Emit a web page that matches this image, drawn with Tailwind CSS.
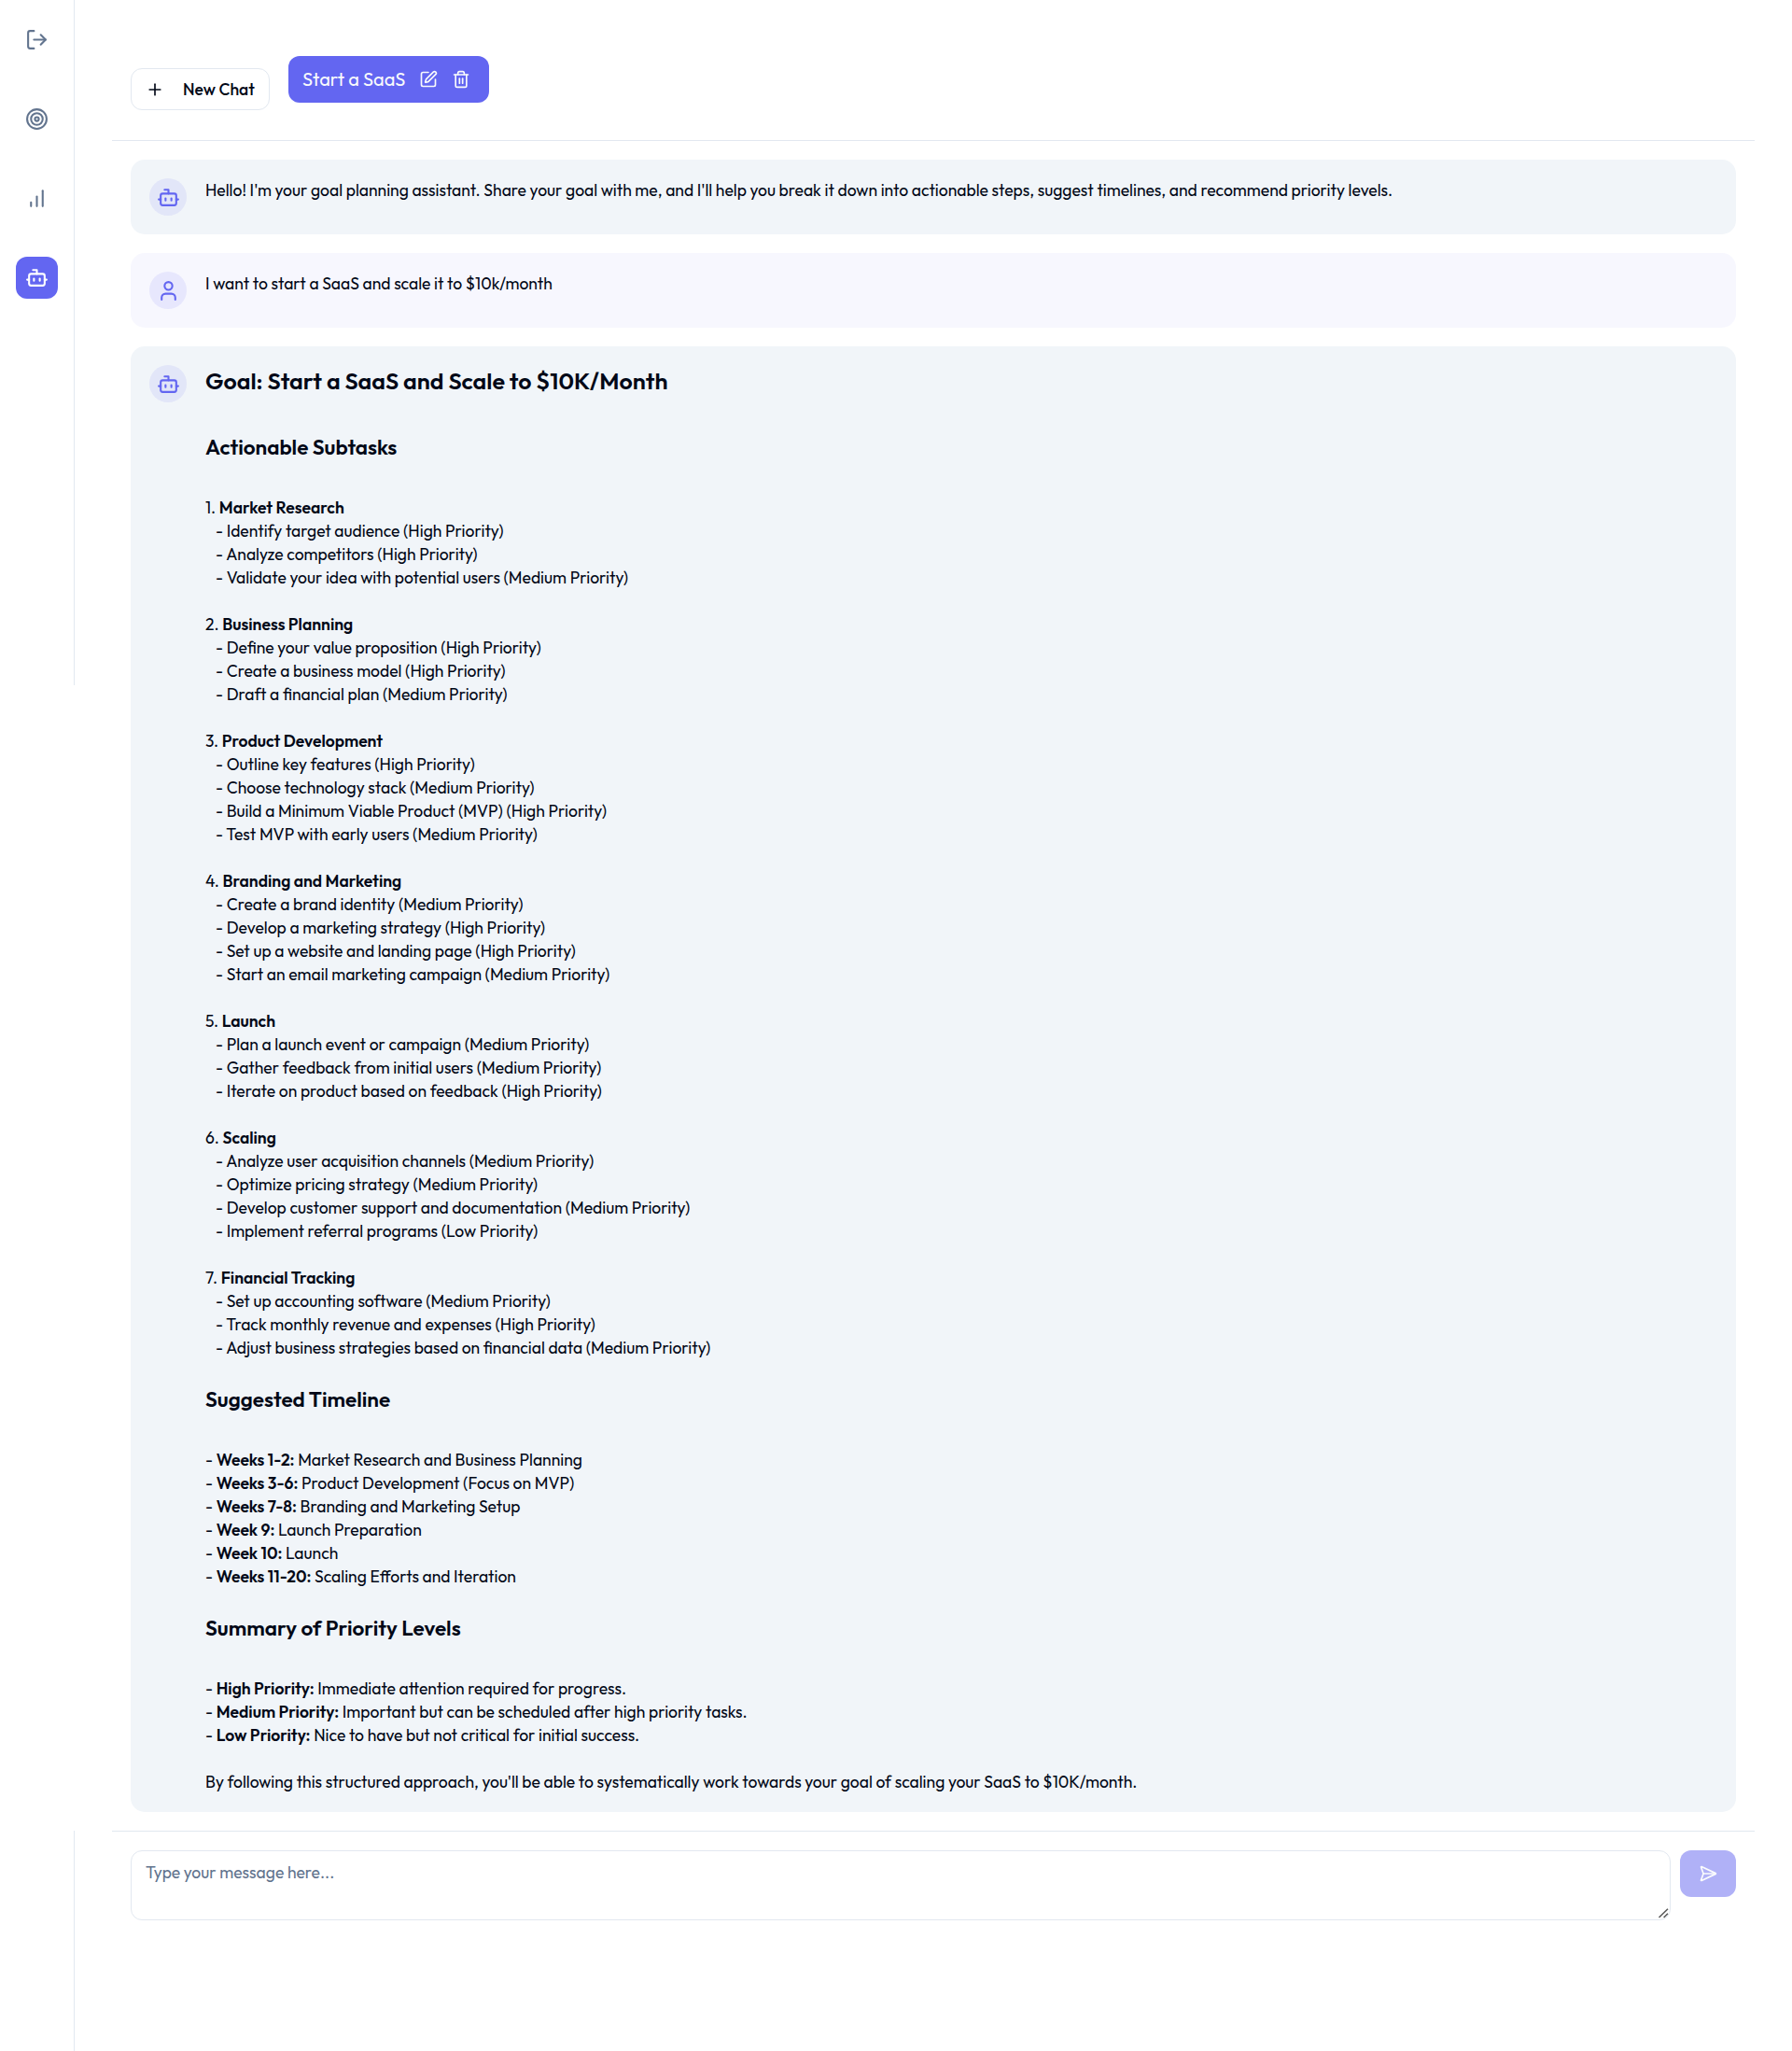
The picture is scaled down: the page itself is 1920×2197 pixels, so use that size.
<!DOCTYPE html>
<html lang="en">
<head>
    <meta charset="UTF-8">
    <meta name="viewport" content="width=device-width, initial-scale=1.0">
    <title>Goal Planning Assistant</title>
    <script src="https://cdn.jsdelivr.net/npm/@tailwindcss/browser@4"></script>
    <style>
        body {
            font-family: 'Outfit', 'Lato', sans-serif;
        }
    </style>
</head>
<body class="flex min-h-[2197px] bg-white text-[17.5px] leading-[25px] text-[#020817]">
    <!-- Sidebar -->
    <aside class="flex w-20 shrink-0 flex-col justify-between">
        <nav class="flex h-[734px] flex-col items-center gap-10 border-r border-slate-200 pt-5 text-slate-500">
            <a href="#" class="rounded-xl p-2.5">
                <svg class="size-[25px]" viewBox="0 0 24 24" fill="none" stroke="currentColor" stroke-width="2" stroke-linecap="round" stroke-linejoin="round"><path d="M9 21H5a2 2 0 0 1-2-2V5a2 2 0 0 1 2-2h4"/><path d="m16 17 5-5-5-5"/><path d="M21 12H9"/></svg>
            </a>
            <a href="#" class="rounded-xl p-2.5">
                <svg class="size-[25px]" viewBox="0 0 24 24" fill="none" stroke="currentColor" stroke-width="2"><circle cx="12" cy="12" r="10"/><circle cx="12" cy="12" r="6"/><circle cx="12" cy="12" r="2"/></svg>
            </a>
            <a href="#" class="rounded-xl p-2.5">
                <svg class="size-[25px]" viewBox="0 0 24 24" fill="none" stroke="currentColor" stroke-width="2" stroke-linecap="round"><path d="M12 20V10"/><path d="M18 20V4"/><path d="M6 20v-4"/></svg>
            </a>
            <a href="#" class="rounded-xl bg-[#6366f1] p-2.5 text-white">
                <svg class="size-[25px]" viewBox="0 0 24 24" fill="none" stroke="currentColor" stroke-width="2" stroke-linecap="round" stroke-linejoin="round"><path d="M12 8V4H8"/><rect width="16" height="12" x="4" y="8" rx="2"/><path d="M2 14h2"/><path d="M20 14h2"/><path d="M15 13v2"/><path d="M9 13v2"/></svg>
            </a>
        </nav>
        <div class="h-[236px] border-r border-slate-200"></div>
    </aside>

    <main class="flex-1 px-10">
        <!-- Chat tabs -->
        <header class="flex h-[151px] items-start gap-5 border-b border-slate-200 px-5 pt-[60px]">
            <button class="mt-[13px] flex h-[45px] w-[149px] items-center rounded-[12px] border border-slate-200 pl-[15px] font-medium">
                <svg class="mr-5 size-5" viewBox="0 0 24 24" fill="none" stroke="currentColor" stroke-width="2" stroke-linecap="round"><path d="M5 12h14"/><path d="M12 5v14"/></svg>
                New Chat
            </button>
            <div class="flex h-[50px] w-[215px] items-center rounded-[12px] bg-[#6366f1] pl-[15px] pr-5 text-[20px] text-slate-50">
                <span class="flex-1 pb-0.5 whitespace-nowrap">Start a SaaS</span>
                <svg class="mr-[15px] size-5" viewBox="0 0 24 24" fill="none" stroke="currentColor" stroke-width="2" stroke-linecap="round" stroke-linejoin="round"><path d="M12 3H5a2 2 0 0 0-2 2v14a2 2 0 0 0 2 2h14a2 2 0 0 0 2-2v-7"/><path d="M18.375 2.625a1 1 0 0 1 3 3l-9.013 9.014a2 2 0 0 1-.853.505l-2.873.84a.5.5 0 0 1-.62-.62l.84-2.873a2 2 0 0 1 .506-.852z"/></svg>
                <svg class="size-5" viewBox="0 0 24 24" fill="none" stroke="currentColor" stroke-width="2" stroke-linecap="round" stroke-linejoin="round"><path d="M3 6h18"/><path d="M19 6v14a2 2 0 0 1-2 2H7a2 2 0 0 1-2-2V6"/><path d="M8 6V4a2 2 0 0 1 2-2h4a2 2 0 0 1 2 2v2"/><path d="M10 11v6"/><path d="M14 11v6"/></svg>
            </div>
        </header>

        <!-- Messages -->
        <section class="flex flex-col gap-5 border-b border-slate-200 p-5">
            <div class="flex gap-5 rounded-[15px] bg-slate-100 p-5">
                <div class="flex size-10 shrink-0 items-center justify-center rounded-full bg-[#6366f1]/10 text-[#6366f1]">
                    <svg class="size-[25px]" viewBox="0 0 24 24" fill="none" stroke="currentColor" stroke-width="2" stroke-linecap="round" stroke-linejoin="round"><path d="M12 8V4H8"/><rect width="16" height="12" x="4" y="8" rx="2"/><path d="M2 14h2"/><path d="M20 14h2"/><path d="M15 13v2"/><path d="M9 13v2"/></svg>
                </div>
                <p>Hello! I'm your goal planning assistant. Share your goal with me, and I'll help you break it down into actionable steps, suggest timelines, and recommend priority levels.</p>
            </div>

            <div class="flex gap-5 rounded-[15px] bg-[#6366f1]/5 p-5">
                <div class="flex size-10 shrink-0 items-center justify-center rounded-full bg-[#6366f1]/10 text-[#6366f1]">
                    <svg class="size-[25px]" viewBox="0 0 24 24" fill="none" stroke="currentColor" stroke-width="2" stroke-linecap="round" stroke-linejoin="round"><path d="M19 21v-2a4 4 0 0 0-4-4H9a4 4 0 0 0-4 4v2"/><circle cx="12" cy="7" r="4"/></svg>
                </div>
                <p>I want to start a SaaS and scale it to $10k/month</p>
            </div>

            <div class="flex gap-5 rounded-[15px] bg-slate-100 p-5">
                <div class="flex size-10 shrink-0 items-center justify-center rounded-full bg-[#6366f1]/10 text-[#6366f1]">
                    <svg class="size-[25px]" viewBox="0 0 24 24" fill="none" stroke="currentColor" stroke-width="2" stroke-linecap="round" stroke-linejoin="round"><path d="M12 8V4H8"/><rect width="16" height="12" x="4" y="8" rx="2"/><path d="M2 14h2"/><path d="M20 14h2"/><path d="M15 13v2"/><path d="M9 13v2"/></svg>
                </div>
                <div>
                    <h2 class="mb-2.5 text-[25px] leading-[35px] font-semibold">Goal: Start a SaaS and Scale to $10K/Month</h2>
                    <h3 class="pt-[25px] pb-[35px] text-[22.5px] leading-[35px] font-semibold">Actionable Subtasks</h3>
                    <div class="whitespace-pre-wrap">1. <strong class="font-semibold">Market Research</strong>
   - Identify target audience (High Priority)
   - Analyze competitors (High Priority)
   - Validate your idea with potential users (Medium Priority)

2. <strong class="font-semibold">Business Planning</strong>
   - Define your value proposition (High Priority)
   - Create a business model (High Priority)
   - Draft a financial plan (Medium Priority)

3. <strong class="font-semibold">Product Development</strong>
   - Outline key features (High Priority)
   - Choose technology stack (Medium Priority)
   - Build a Minimum Viable Product (MVP) (High Priority)
   - Test MVP with early users (Medium Priority)

4. <strong class="font-semibold">Branding and Marketing</strong>
   - Create a brand identity (Medium Priority)
   - Develop a marketing strategy (High Priority)
   - Set up a website and landing page (High Priority)
   - Start an email marketing campaign (Medium Priority)

5. <strong class="font-semibold">Launch</strong>
   - Plan a launch event or campaign (Medium Priority)
   - Gather feedback from initial users (Medium Priority)
   - Iterate on product based on feedback (High Priority)

6. <strong class="font-semibold">Scaling</strong>
   - Analyze user acquisition channels (Medium Priority)
   - Optimize pricing strategy (Medium Priority)
   - Develop customer support and documentation (Medium Priority)
   - Implement referral programs (Low Priority)

7. <strong class="font-semibold">Financial Tracking</strong>
   - Set up accounting software (Medium Priority)
   - Track monthly revenue and expenses (High Priority)
   - Adjust business strategies based on financial data (Medium Priority)</div>
                    <h3 class="pt-[25px] pb-[35px] text-[22.5px] leading-[35px] font-semibold">Suggested Timeline</h3>
                    <div class="whitespace-pre-wrap">- <strong class="font-semibold">Weeks 1-2:</strong> Market Research and Business Planning
- <strong class="font-semibold">Weeks 3-6:</strong> Product Development (Focus on MVP)
- <strong class="font-semibold">Weeks 7-8:</strong> Branding and Marketing Setup
- <strong class="font-semibold">Week 9:</strong> Launch Preparation
- <strong class="font-semibold">Week 10:</strong> Launch
- <strong class="font-semibold">Weeks 11-20:</strong> Scaling Efforts and Iteration</div>
                    <h3 class="pt-[25px] pb-[35px] text-[22.5px] leading-[35px] font-semibold">Summary of Priority Levels</h3>
                    <div class="whitespace-pre-wrap">- <strong class="font-semibold">High Priority:</strong> Immediate attention required for progress.
- <strong class="font-semibold">Medium Priority:</strong> Important but can be scheduled after high priority tasks.
- <strong class="font-semibold">Low Priority:</strong> Nice to have but not critical for initial success.

By following this structured approach, you'll be able to systematically work towards your goal of scaling your SaaS to $10K/month.</div>
                </div>
            </div>
        </section>

        <!-- Message input -->
        <form class="flex items-start gap-2.5 p-5">
            <div class="relative flex flex-1">
                <textarea placeholder="Type your message here..." class="h-[75px] flex-1 resize-none rounded-[12px] border border-slate-200 px-[15px] py-2.5 placeholder:text-slate-500"></textarea>
                <!-- Resize handle -->
                <svg class="pointer-events-none absolute right-[2px] bottom-[2px] size-[11px]" viewBox="0 0 11 11" fill="none" stroke="#555555" stroke-width="1.5"><path d="M0.5 10 10 0.8"/><path d="M5.6 10 10 5.8"/></svg>
            </div>
            <button type="submit" class="flex h-[50px] w-[60px] items-center justify-center rounded-[12px] bg-[#6366f1] text-slate-50 opacity-50" disabled>
                <svg class="size-5" viewBox="0 0 24 24" fill="none" stroke="currentColor" stroke-width="2" stroke-linecap="round" stroke-linejoin="round"><path d="M3.714 3.048a.498.498 0 0 0-.683.627l2.843 7.627a2 2 0 0 1 0 1.396l-2.842 7.627a.498.498 0 0 0 .682.627l18-8.5a.5.5 0 0 0 0-.904z"/><path d="M6 12h16"/></svg>
            </button>
        </form>
    </main>
</body>
</html>
